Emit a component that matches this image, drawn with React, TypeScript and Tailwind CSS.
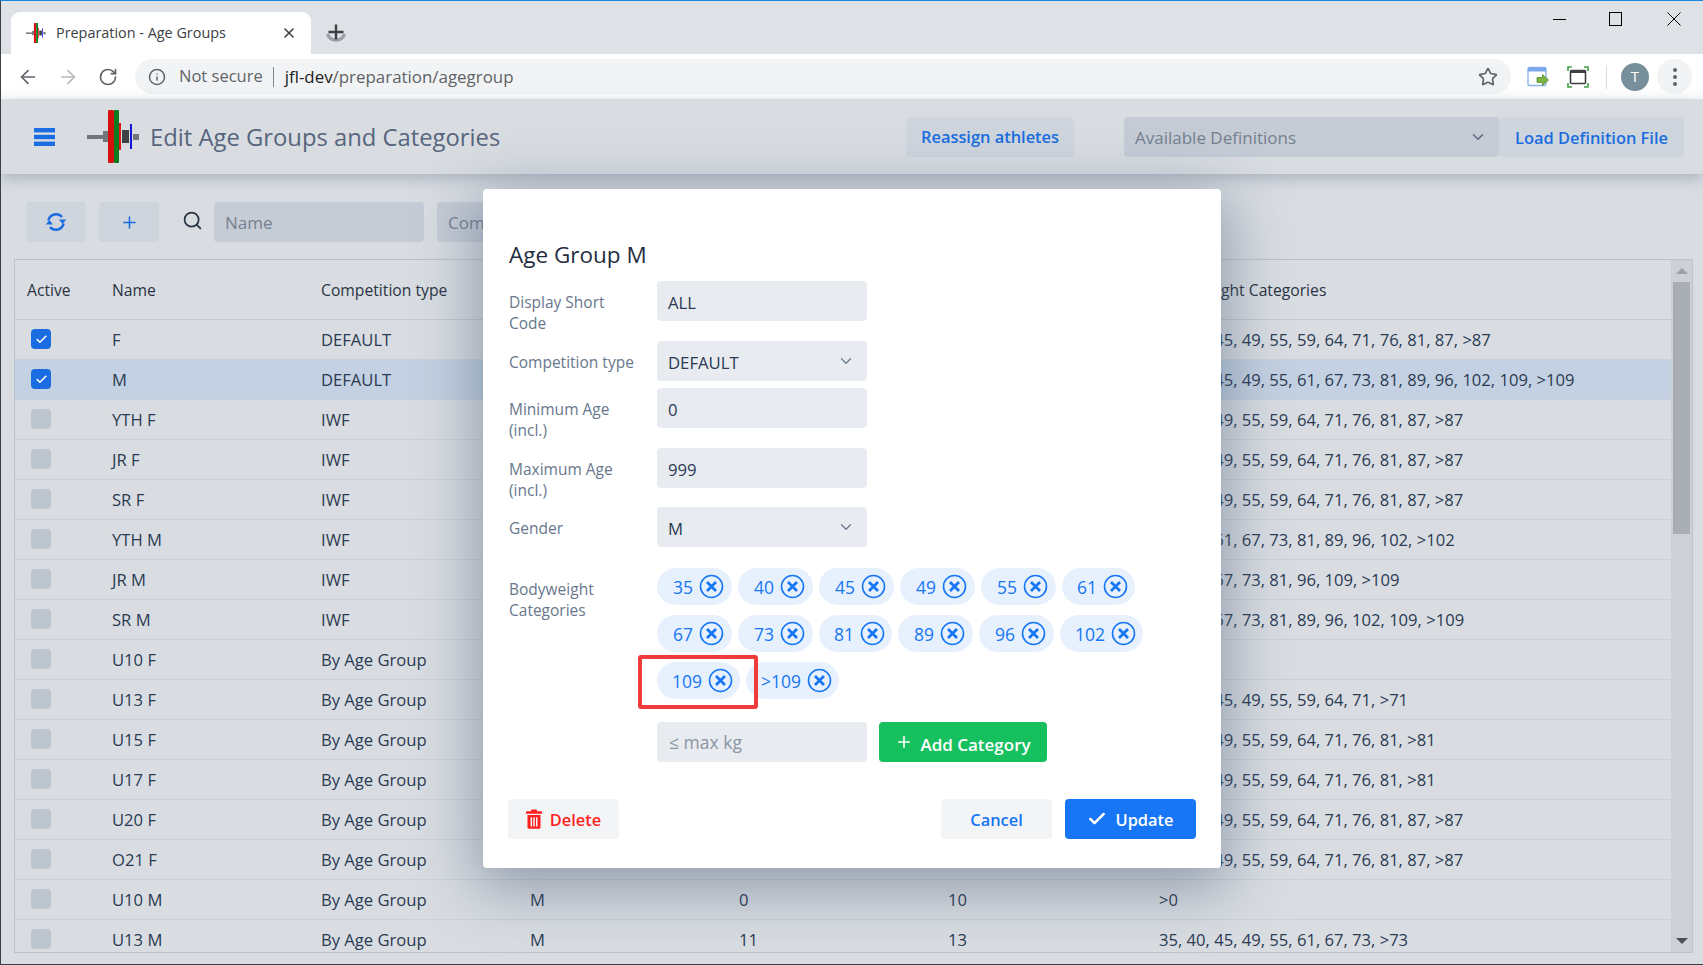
import { ArrowLeft, ArrowRight, ChevronDown, Info, Plus, RotateCw, Search, Star, X, Check } from "lucide-react";

const rows = [
  { name: "F", type: "DEFAULT", gender: "F", min: "0", max: "999", cats: "35, 40, 45, 49, 55, 59, 64, 71, 76, 81, 87, >87", active: true },
  { name: "M", type: "DEFAULT", gender: "M", min: "0", max: "999", cats: "35, 40, 45, 49, 55, 61, 67, 73, 81, 89, 96, 102, 109, >109", active: true, selected: true },
  { name: "YTH F", type: "IWF", gender: "F", min: "13", max: "17", cats: "40, 45, 49, 55, 59, 64, 71, 76, 81, 87, >87" },
  { name: "JR F", type: "IWF", gender: "F", min: "15", max: "20", cats: "40, 45, 49, 55, 59, 64, 71, 76, 81, 87, >87" },
  { name: "SR F", type: "IWF", gender: "F", min: "15", max: "999", cats: "40, 45, 49, 55, 59, 64, 71, 76, 81, 87, >87" },
  { name: "YTH M", type: "IWF", gender: "M", min: "13", max: "17", cats: "49, 55, 61, 67, 73, 81, 89, 96, 102, >102" },
  { name: "JR M", type: "IWF", gender: "M", min: "15", max: "20", cats: "55, 61, 67, 73, 81, 96, 109, >109" },
  { name: "SR M", type: "IWF", gender: "M", min: "15", max: "999", cats: "55, 61, 67, 73, 81, 89, 96, 102, 109, >109" },
  { name: "U10 F", type: "By Age Group", gender: "F", min: "0", max: "10", cats: ">0" },
  { name: "U13 F", type: "By Age Group", gender: "F", min: "11", max: "13", cats: "35, 40, 45, 49, 55, 59, 64, 71, >71" },
  { name: "U15 F", type: "By Age Group", gender: "F", min: "14", max: "15", cats: "40, 45, 49, 55, 59, 64, 71, 76, 81, >81" },
  { name: "U17 F", type: "By Age Group", gender: "F", min: "16", max: "17", cats: "40, 45, 49, 55, 59, 64, 71, 76, 81, >81" },
  { name: "U20 F", type: "By Age Group", gender: "F", min: "18", max: "20", cats: "40, 45, 49, 55, 59, 64, 71, 76, 81, 87, >87" },
  { name: "O21 F", type: "By Age Group", gender: "F", min: "21", max: "999", cats: "40, 45, 49, 55, 59, 64, 71, 76, 81, 87, >87" },
  { name: "U10 M", type: "By Age Group", gender: "M", min: "0", max: "10", cats: ">0" },
  { name: "U13 M", type: "By Age Group", gender: "M", min: "11", max: "13", cats: "35, 40, 45, 49, 55, 61, 67, 73, >73" },
];

const chips = ["35", "40", "45", "49", "55", "61", "67", "73", "81", "89", "96", "102", "109", ">109"];

function Logo({ size }: { size: number }) {
  return (
    <svg width={size} height={size} viewBox="0 0 53 53" className="shrink-0">
      <rect x="0" y="25" width="16" height="4" fill="#70767b" />
      <rect x="16" y="21" width="5" height="11" fill="#70767b" />
      <rect x="21" y="0" width="6" height="53" rx="1" fill="#d60f0f" />
      <rect x="27" y="0" width="5" height="53" rx="1" fill="#0b7d1f" />
      <rect x="32" y="13" width="2" height="27" fill="#e01b1b" />
      <rect x="35" y="20" width="7" height="13" fill="#3d4247" />
      <rect x="43" y="14" width="2" height="25" fill="#1414d8" />
      <rect x="46" y="24" width="6" height="6" fill="#70767b" />
    </svg>
  );
}

function ChipX() {
  return (
    <svg width="25" height="25" viewBox="0 0 25 25" className="shrink-0" fill="none" stroke="#1676f3">
      <circle cx="12.5" cy="12.5" r="11" strokeWidth="1.6" />
      <path d="M8 8l9 9M17 8l-9 9" strokeWidth="2.8" />
    </svg>
  );
}

function Trash() {
  return (
    <svg width="16" height="20" viewBox="0 0 16 20" fill="#ff1f1f" className="shrink-0">
      <path d="M5.5 0.5h5l0.6 1.8H15a1 1 0 0 1 1 1v1.4H0V3.3a1 1 0 0 1 1-1h3.9z" />
      <path fillRule="evenodd" d="M1.5 6h13v12.2a1.6 1.6 0 0 1-1.6 1.6H3.1a1.6 1.6 0 0 1-1.6-1.6zM4.6 8.2v9.2h1.5V8.2zM7.3 8.2v9.2h1.5V8.2zM10 8.2v9.2h1.5V8.2z" />
    </svg>
  );
}

function Reload() {
  return (
    <svg width="22" height="22" viewBox="0 0 22 22" fill="#1a6de0" stroke="none">
      <g>
        <path d="M3.4 9.4A7.8 7.8 0 0 1 17 6" fill="none" stroke="#1a6de0" strokeWidth="2.5" />
        <path d="M14 8.6h7.2l-3.6 4.4z" />
      </g>
      <g transform="rotate(180 11 11)">
        <path d="M3.4 9.4A7.8 7.8 0 0 1 17 6" fill="none" stroke="#1a6de0" strokeWidth="2.5" />
        <path d="M14 8.6h7.2l-3.6 4.4z" />
      </g>
    </svg>
  );
}

function ChromeBar() {
  return (
    <>
      {/* Tab strip */}
      <div className="flex h-[53px] shrink-0 bg-[#dee1e6] pl-[10px]">
        <div className="mt-[11px] flex h-[42px] w-[300px] items-center rounded-t-[9px] bg-white pb-[1px] pl-[15px] pr-[14px]">
          <Logo size={20} />
          <span className="ml-[10px] flex-1 text-[14.4px] text-[#3c4043]">Preparation - Age Groups</span>
          <X size={16} strokeWidth={2.4} className="text-[#3c4043]" />
        </div>
        <div className="ml-[13px] mt-[20px] h-[24px] w-[24px]">
          <svg width="24" height="24" viewBox="0 0 24 24" fill="none">
            <path d="M3.5 13a9 9 0 0 0 17 0" stroke="#9aa0a6" strokeWidth="3.4" />
            <path d="M12 3.5v15M4.5 11h15" stroke="#3c4043" strokeWidth="2.4" />
          </svg>
        </div>
        <div className="ml-auto mt-[11px] flex h-[14px] items-center">
          <svg width="13" height="13" viewBox="0 0 13 13" className="mr-[43px]">
            <path d="M0 6.5h13" stroke="#000" strokeWidth="1" />
          </svg>
          <svg width="13" height="14" viewBox="0 0 13 14" className="mr-[45px]">
            <rect x="0.5" y="0.5" width="12" height="13" fill="none" stroke="#000" strokeWidth="1" />
          </svg>
          <svg width="14" height="14" viewBox="0 0 14 14" className="mr-[22px]">
            <path d="M0.5 0.5l13 13M13.5 0.5l-13 13" stroke="#000" strokeWidth="1" />
          </svg>
        </div>
      </div>
      {/* Address bar */}
      <div className="flex h-[45px] shrink-0 items-center bg-white pl-[16px]">
        <ArrowLeft size={22} strokeWidth={1.8} className="text-[#5f6368]" />
        <ArrowRight size={22} strokeWidth={1.8} className="ml-[18px] text-[#b7babd]" />
        <RotateCw size={20} strokeWidth={2} className="ml-[19px] text-[#5f6368]" />
        <div className="ml-[17px] flex h-[35px] w-[1376px] items-center rounded-full bg-[#f1f3f4] pl-[13px] pr-[13px] text-[16.5px]">
          <Info size={18} strokeWidth={2} className="text-[#5f6368]" />
          <span className="ml-[13px] text-[#5f6368]">Not secure</span>
          <span className="ml-[10px] h-[20px] w-px bg-[#80868b]" />
          <span className="ml-[11px] text-[16.9px] text-[#202124]">jfl-dev</span>
          <span className="text-[16.9px] text-[#5f6368]">/preparation/agegroup</span>
          <Star size={20} strokeWidth={2} className="ml-auto text-[#5f6368]" />
        </div>
        <svg width="24" height="24" viewBox="0 0 24 24" className="ml-[15px] shrink-0">
          <rect x="2" y="2.5" width="18" height="18" rx="1.5" fill="#fff" stroke="#8db4ea" strokeWidth="1.4" />
          <rect x="2" y="2.5" width="18" height="4" fill="#7aa7ea" />
          <path d="M11 12.5h5.5V9.5l6 5.5-6 5.5v-3H11z" fill="#7cb342" stroke="#558b2f" strokeWidth="0.8" />
        </svg>
        <svg width="24" height="24" viewBox="0 0 24 24" fill="none" className="ml-[16px] shrink-0">
          <path d="M2 6V2h4M18 2h4v4M22 18v4h-4M6 22H2v-4" stroke="#43a047" strokeWidth="1.6" />
          <rect x="4.5" y="5.5" width="15" height="13" rx="1" stroke="#3c4043" strokeWidth="1.6" />
          <rect x="4.5" y="5.5" width="15" height="2.5" fill="#3c4043" />
        </svg>
        <span className="ml-[16px] h-[24px] w-px bg-[#dadce0]" />
        <div className="ml-[14px] flex h-[28px] w-[28px] items-center justify-center rounded-full bg-[#78909c] text-[15px] text-white">T</div>
        <div className="ml-[8px] flex h-[35px] w-[35px] items-center justify-center rounded-full bg-[#f1f3f4]">
          <svg width="6" height="20" viewBox="0 0 6 20" fill="#5f6368">
            <circle cx="3" cy="3" r="2" />
            <circle cx="3" cy="10" r="2" />
            <circle cx="3" cy="17" r="2" />
          </svg>
        </div>
      </div>
    </>
  );
}

function AppHeader() {
  return (
    <div className="relative z-10 flex h-[75px] shrink-0 items-center bg-[#d9dde2] pl-[33px] shadow-[0_4px_14px_rgba(80,95,120,0.35)]">
      <svg width="21" height="18" viewBox="0 0 21 18" fill="#1a6de0" className="shrink-0">
        <rect width="21" height="4.4" />
        <rect y="6.8" width="21" height="4.4" />
        <rect y="13.6" width="21" height="4.4" />
      </svg>
      <div className="ml-[32px]">
        <Logo size={53} />
      </div>
      <span className="ml-[10px] pt-[3px] text-[23.8px] text-[#57667d]">Edit Age Groups and Categories</span>
      <button className="ml-auto h-[40px] w-[168px] rounded-[4px] bg-[#cfd5dd] pt-[2px] text-[16.4px] font-semibold text-[#1a6de0]">Reassign athletes</button>
      <div className="ml-[50px] flex h-[40px] w-[375px] items-center justify-between rounded-[4px] bg-[#c5ccd6] pl-[11px] pr-[12px] text-[17px] text-[#76818f]">
        <span className="pt-[2px]">Available Definitions</span>
        <ChevronDown size={18} className="text-[#5b6a7e]" />
      </div>
      <button className="mr-[19px] h-[40px] w-[185px] rounded-[4px] bg-[#cfd5dd] pt-[3px] text-[16.4px] font-semibold text-[#1a6de0]">Load Definition File</button>
    </div>
  );
}

function Table() {
  return (
    <div className="ml-[13px] mr-[10px] flex h-[694px] overflow-hidden border border-[#bcc3cc]">
      <div className="min-w-0 flex-1 text-[16.6px] text-[#2a3a52]">
        <div className="flex h-[60px] items-center border-b border-[#c3cad3] pt-[2px] text-[15.7px] font-medium text-[#2a3443]">
          <div className="w-[85px] pl-[12px]">Active</div>
          <div className="w-[209px] pl-[12px]">Name</div>
          <div className="w-[209px] pl-[12px]">Competition type</div>
          <div className="w-[209px] pl-[12px]">Gender</div>
          <div className="w-[209px] pl-[12px]">Minimum Age</div>
          <div className="w-[209px] pl-[12px]">Maximum Age</div>
          <div className="flex-1 pl-[14px]">Bodyweight Categories</div>
        </div>
        {rows.map((r) => (
          <div key={r.name} className={`flex h-[40px] shrink-0 items-center border-b border-[#c9d0d8] pt-[2px] ${r.selected ? "bg-[#c4d1e2]" : ""}`}>
            <div className="-mt-[3px] w-[85px] pl-[16px]">
              {r.active ? (
                <div className="flex h-[20px] w-[20px] items-center justify-center rounded-[4px] bg-[#1a6de0]">
                  <Check size={13} strokeWidth={3} className="text-white" />
                </div>
              ) : (
                <div className="h-[20px] w-[20px] rounded-[4px] bg-[#bdc5ce]" />
              )}
            </div>
            <div className="w-[209px] pl-[12px]">{r.name}</div>
            <div className="w-[209px] pl-[12px]">{r.type}</div>
            <div className="w-[209px] pl-[12px]">{r.gender}</div>
            <div className="w-[209px] pl-[12px]">{r.min}</div>
            <div className="w-[209px] pl-[12px]">{r.max}</div>
            <div className="flex-1 pl-[14px]">{r.cats}</div>
          </div>
        ))}
      </div>
      {/* scrollbar */}
      <div className="flex w-[21px] shrink-0 flex-col items-center bg-[#cdd1d6]">
        <div className="mt-[8px] h-0 w-0 border-x-[6px] border-b-[6px] border-x-transparent border-b-[#9aa0a6]" />
        <div className="mt-[8px] h-[252px] w-[17px] bg-[#a9aeb4]" />
        <div className="mb-[8px] mt-auto h-0 w-0 border-x-[6px] border-t-[6px] border-x-transparent border-t-[#4d5156]" />
      </div>
    </div>
  );
}

function Field({ value, select }: { value: string; select?: boolean }) {
  return (
    <div className="flex h-[40px] w-[210px] items-center justify-between rounded-[4px] bg-[#e8ebf0] pl-[11px] pr-[12px] text-[16.7px] text-[#2a3a52]">
      <span className="pt-[2px]">{value}</span>
      {select && <ChevronDown size={18} strokeWidth={1.6} className="text-[#6a7a90]" />}
    </div>
  );
}

function Modal() {
  return (
    <div className="absolute left-[482px] top-[188px] z-20 h-[679px] w-[738px] rounded-[4px] bg-white px-[26px] pt-[52px] shadow-[0_14px_60px_6px_rgba(70,88,115,0.5)]">
      <h2 className="mb-[12px] h-[28px] text-[22.5px] font-medium leading-[28px] text-[#1f2d40]">Age Group M</h2>
      <div className="text-[15.5px] leading-[21px] text-[#68778c]">
        <div className="flex h-[60px]">
          <div className="w-[148px] pr-[30px] pt-[11px]">Display Short Code</div>
          <Field value="ALL" />
        </div>
        <div className="flex h-[47px]">
          <div className="w-[148px] pt-[11px]">Competition type</div>
          <Field value="DEFAULT" select />
        </div>
        <div className="flex h-[60px]">
          <div className="w-[148px] pr-[15px] pt-[11px]">Minimum Age (incl.)</div>
          <Field value="0" />
        </div>
        <div className="flex h-[59px]">
          <div className="w-[148px] pr-[15px] pt-[11px]">Maximum Age (incl.)</div>
          <Field value="999" />
        </div>
        <div className="flex h-[61px]">
          <div className="w-[148px] pt-[11px]">Gender</div>
          <Field value="M" select />
        </div>
        <div className="flex">
          <div className="w-[148px] pr-[30px] pt-[11px]">Bodyweight Categories</div>
          <div className="flex flex-1 flex-wrap gap-x-[6px] gap-y-[10px]">
            {chips.map((c) => (
              <div key={c} className={`flex h-[37px] items-center gap-[6px] rounded-full bg-[#e7f1fe] text-[17.5px] font-medium text-[#1676f3] ${c.includes("1") ? "pl-[15px] pr-[7px]" : "pl-[16px] pr-[8px]"}`}>
                <span className="pt-[2px]">{c}</span>
                <ChipX />
              </div>
            ))}
          </div>
        </div>
        <div className="ml-[148px] mt-[23px] flex gap-[12px]">
          <div className="flex h-[40px] w-[210px] items-center rounded-[4px] bg-[#e8ebf0] pl-[12px] text-[17.5px] text-[#8a95a3]">≤ max kg</div>
          <button className="flex h-[40px] w-[168px] items-center justify-center gap-[7px] rounded-[4px] bg-[#17c05f] text-[17px] font-semibold text-white">
            <Plus size={18} strokeWidth={2.2} />
            <span className="pt-[5px]">Add Category</span>
          </button>
        </div>
      </div>
      <div className="-mx-px mt-[37px] flex items-center text-[16.4px] font-semibold">
        <button className="flex h-[40px] w-[111px] items-center justify-center gap-[8px] rounded-[4px] bg-[#f3f4f6] text-[#ff1f1f]">
          <Trash />
          <span className="pt-[2px]">Delete</span>
        </button>
        <button className="ml-auto h-[40px] w-[111px] rounded-[4px] bg-[#f3f4f6] pt-[2px] text-[#1676f3]">Cancel</button>
        <button className="ml-[13px] flex h-[40px] w-[131px] items-center justify-center gap-[8px] rounded-[4px] bg-[#1676f5] text-white">
          <Check size={20} strokeWidth={3} />
          <span className="pt-[2px]">Update</span>
        </button>
      </div>
      {/* Red callout round the chip */}
      <div className="absolute left-[155px] top-[466px] h-[54px] w-[120px] rounded-[3px] border-[4px] border-[#ef3b3b]" />
    </div>
  );
}

export default function App() {
  return (
    <div className="relative flex h-[965px] w-[1703px] flex-col overflow-hidden border-b border-l border-t border-b-[#3a3f45] border-l-[#3a3f45] border-t-[#1a88de] bg-[#d9dde2] font-['Open_Sans',sans-serif]">
      <ChromeBar />
      <AppHeader />
      <div className="flex h-[68px] shrink-0 items-start pl-[25px] pt-[28px]">
        <button className="flex h-[40px] w-[60px] items-center justify-center rounded-[4px] bg-[#cfd5dd]">
          <Reload />
        </button>
        <button className="ml-[13px] flex h-[40px] w-[60px] items-center justify-center rounded-[4px] bg-[#cfd5dd]">
          <Plus size={19} strokeWidth={2} className="text-[#1a6de0]" />
        </button>
        <Search size={21} strokeWidth={2} className="ml-[23px] mt-[8px] text-[#2a3443]" />
        <div className="ml-[11px] flex h-[40px] w-[210px] items-center rounded-[4px] bg-[#c5ccd6] pl-[11px] pt-[2px] text-[17px] text-[#76818f]">Name</div>
        <div className="ml-[13px] flex h-[40px] w-[210px] items-center rounded-[4px] bg-[#c5ccd6] pl-[11px] pt-[2px] text-[17px] text-[#76818f]">Competition type</div>
      </div>
      <div className="flex-1 overflow-hidden pt-[17px]">
        <Table />
      </div>
      <Modal />
    </div>
  );
}
